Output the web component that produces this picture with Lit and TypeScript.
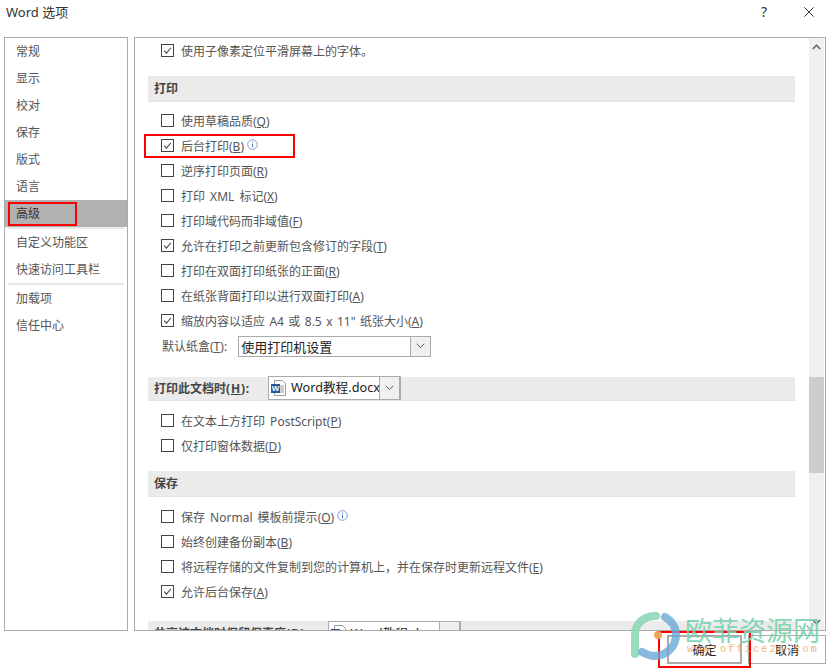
import { LitElement, html, css, svg } from "lit";
import { customElement } from "lit/decorators.js";

const check = svg`<path d="M2.6 6.6 5.3 9.6 10.6 3.2" fill="none" stroke="#444" stroke-width="1.2"/>`;
const wordIcon = html`<svg class="word" viewBox="0 0 16 16" width="16" height="16">
  <path d="M3.5.5h8l3 3v12h-11z" fill="#fff" stroke="#9a9a9a"/>
  <path d="M9 6h4M9 8h4M9 10h4M9 12h4" stroke="#9a9a9a"/>
  <rect x="0" y="4" width="9" height="9" fill="#2b579a"/>
  <text x="4.5" y="11.4" font-size="8" font-weight="700" fill="#fff" text-anchor="middle" font-family="Liberation Sans">W</text>
</svg>`;
const info = html`<svg class="info" viewBox="0 0 11 11" width="11" height="11">
  <circle cx="5.5" cy="5.5" r="4.8" fill="none" stroke="#7f9fd6"/>
  <path d="M5.5 2.6v1.2M5.5 4.8v3.4" stroke="#4a78c4" stroke-width="1"/>
</svg>`;
const chev = html`<svg viewBox="0 0 9 6" width="9" height="6"><path d="M.7.8 4.5 4.6 8.3.8" fill="none" stroke="#555" stroke-width="1"/></svg>`;

type Row = { t: unknown; c?: boolean; i?: boolean };

const printRows: Row[] = [
  { t: html`使用草稿品质(<u>Q</u>)` },
  { t: html`后台打印(<u>B</u>)`, c: true, i: true },
  { t: html`逆序打印页面(<u>R</u>)` },
  { t: html`打印 XML 标记(<u>X</u>)` },
  { t: html`打印域代码而非域值(<u>F</u>)` },
  { t: html`允许在打印之前更新包含修订的字段(<u>T</u>)`, c: true },
  { t: html`打印在双面打印纸张的正面(<u>R</u>)` },
  { t: html`在纸张背面打印以进行双面打印(<u>A</u>)` },
  { t: html`<span class="tight">缩放内容以适应 A4 或 8.5 x 11" 纸张大小(<u>A</u>)</span>`, c: true },
];
const docRows: Row[] = [
  { t: html`在文本上方打印 PostScript(<u>P</u>)` },
  { t: html`仅打印窗体数据(<u>D</u>)` },
];
const saveRows: Row[] = [
  { t: html`保存 Normal 模板前提示(<u>O</u>)`, i: true },
  { t: html`始终创建备份副本(<u>B</u>)` },
  { t: html`将远程存储的文件复制到您的计算机上，并在保存时更新远程文件(<u>E</u>)` },
  { t: html`允许后台保存(<u>A</u>)`, c: true },
];

@customElement("app-root")
export class AppRoot extends LitElement {
  static styles = css`
    :host {
      display: block;
      width: 829px;
      height: 669px;
      position: relative;
      overflow: hidden;
      background: #fff;
      font-family: "Noto Sans", "Noto Sans CJK SC", sans-serif;
      font-size: 12px;
      color: #555;
    }
    .title {
      height: 37px;
      display: flex;
      align-items: center;
      padding: 0 15px 14px 6px;
      box-sizing: border-box;
      color: #333;
      font-size: 13px;
    }
    .title .name { flex: 1; }
    .help { font-size: 14px; color: #333; margin-right: 37px; }
    .main {
      display: flex;
      gap: 6px;
      height: 594px;
      padding: 0 3px 0 4px;
    }
    .nav {
      width: 124px;
      box-sizing: border-box;
      border: 1px solid #ababab;
      flex: none;
    }
    .nav .item {
      height: 27px;
      line-height: 27px;
      padding-left: 11px;
    }
    .nav .item.sel { background: #b1b1b1; color: #333; }
    .nav .sep { height: 2px; background: #e8e8e8; margin: 0 3px; }
    .panel {
      flex: 1;
      box-sizing: border-box;
      border: 1px solid #ababab;
      display: flex;
      overflow: hidden;
      min-width: 0;
    }
    .scroll { flex: 1; min-width: 0; height: 592px; overflow: hidden; padding: 0 14px 0 13px; }
    .row {
      height: 25px;
      display: flex;
      align-items: center;
      padding-left: 13px;
      gap: 7px;
      white-space: nowrap;
      word-spacing: 2px;
    }
    .tight { word-spacing: 1.3px; }
    .box { width: 13px; height: 13px; flex: none; box-sizing: border-box; display: block; border: 1px solid #444; background: #fff; }
    u { text-underline-offset: 1px; }
    .info { margin: -3px 0 0 -4px; flex: none; }
    .head {
      background: #ebebeb;
      height: 26px;
      display: flex;
      align-items: center;
      padding: 0 0 2px 6px;
      color: #444;
      font-weight: 700;
      border-bottom: 1px solid #e2e2e2;
      box-sizing: border-box;
      white-space: nowrap;
    }
    .lat { letter-spacing: .8px; }
    .h1 { margin-top: 13px; margin-bottom: 6px; }
    .comborow { height: 26px; display: flex; align-items: center; padding-left: 14px; gap: 11px; }
    .h2 { margin-top: 18px; height: 24px; margin-bottom: 7px; }
    .h3 { margin-top: 13px; margin-bottom: 7px; }
    .h4 { margin-top: 17px; height: 24px; align-items: flex-start; padding-top: 3px; }
    .combo {
      display: flex;
      align-items: stretch;
      box-sizing: border-box;
      border: 1px solid #ababab;
      background: #fff;
      color: #222;
    }
    .combo .val { flex: 1; display: flex; align-items: center; gap: 4px; padding-left: 2px; font-size: 13px; white-space: nowrap; overflow: hidden; font-weight: 400; min-width: 0; }
    .combo .doc { font-size: 12.7px; padding-bottom: 2px; }
    .combo .doc svg { margin-top: 2px; }
    .combo .btn { width: 19px; background: #f0f0f0; border-left: 1px solid #ababab; display: flex; align-items: center; justify-content: center; flex: none; }
    .c1 { width: 193px; height: 21px; }
    .c2 { width: 133px; height: 24px; margin-left: 18px; border-width: 1px 2px 1px 1px; }
    .c3 { width: 133px; height: 24px; margin-left: 18px; margin-top: -3px; border-width: 1px 2px 1px 1px; }
    .word { flex: none; }
    .track {
      width: 15px;
      background: #f0f0f0;
      flex: none;
      display: flex;
      flex-direction: column;
      align-items: center;
      margin-right: 1px;
    }
    .up { height: 17px; display: flex; align-items: center; justify-content: center; }
    .spacer1 { height: 322px; }
    .thumb { width: 15px; height: 96px; background: #cdcdcd; flex: none; }
    .spacer2 { flex: 1; }
    .footer {
      display: flex;
      justify-content: flex-end;
      gap: 6px;
      padding: 4px 3px 0 0;
    }
    .bt {
      height: 29px;
      box-sizing: border-box;
      display: flex;
      align-items: center;
      justify-content: center;
      color: #222;
      background: #fff;
      border: 1px solid #ababab;
    }
    .ok { width: 75px; border: 2px solid #ababab; }
    .cancel { width: 78px; }
    .red { position: absolute; border: 2px solid #f00; box-sizing: border-box; pointer-events: none; }
    .red.a { left: 8px; top: 202px; width: 69px; height: 24px; }
    .red.b { left: 144px; top: 134px; width: 151px; height: 24px; }
    .red.c { left: 658px; top: 631px; width: 93px; height: 37px; }
    .wm { position: absolute; left: 0; top: 0; pointer-events: none; }
    .logo { position: absolute; left: 628px; top: 608px; }
    .wm-cn { position: absolute; left: 685px; top: 614px; font-size: 27px; line-height: 34px; color: #79d2ae; opacity: .9; white-space: nowrap; }
    .wm-en { position: absolute; left: 687px; top: 642px; font-size: 10px; line-height: 16px; color: #f0a860; letter-spacing: 2.25px; white-space: nowrap; font-family: "Liberation Mono", monospace; opacity: .85; }
  `;

  row(r: Row) {
    return html`<div class="row">
      <svg class="box" viewBox="0 0 13 13" style="overflow:visible">${r.c ? check : ""}</svg>
      <span>${r.t}</span>${r.i ? info : ""}
    </div>`;
  }

  render() {
    return html`
      <div class="title">
        <span class="name">Word 选项</span>
        <span class="help">?</span>
        <svg width="10" height="10" viewBox="0 0 10 10"><path d="M.3.3l9.4 9.4M9.7.3.3 9.7" stroke="#333" stroke-width="1" fill="none"/></svg>
      </div>
      <div class="main">
        <div class="nav">
          <div class="item">常规</div>
          <div class="item">显示</div>
          <div class="item">校对</div>
          <div class="item">保存</div>
          <div class="item">版式</div>
          <div class="item">语言</div>
          <div class="item sel">高级</div>
          <div class="sep"></div>
          <div class="item">自定义功能区</div>
          <div class="item">快速访问工具栏</div>
          <div class="sep"></div>
          <div class="item">加载项</div>
          <div class="item">信任中心</div>
        </div>
        <div class="panel">
          <div class="scroll">
            <div class="row">
              <svg class="box" viewBox="0 0 13 13" style="overflow:visible">${check}</svg>
              <span>使用子像素定位平滑屏幕上的字体。</span>
            </div>
            <div class="head h1">打印</div>
            ${printRows.map((r) => this.row(r))}
            <div class="comborow">
              <span>默认纸盒(<u>T</u>):</span>
              <div class="combo c1"><span class="val">使用打印机设置</span><span class="btn">${chev}</span></div>
            </div>
            <div class="head h2">
              <span>打印此文档时<span class="lat">(<u>H</u>):</span></span>
              <div class="combo c2"><span class="val doc">${wordIcon}Word教程.docx</span><span class="btn">${chev}</span></div>
            </div>
            ${docRows.map((r) => this.row(r))}
            <div class="head h3">保存</div>
            ${saveRows.map((r) => this.row(r))}
            <div class="head h4">
              <span>共享该文档时保留保真度<span class="lat">(<u>D</u>):</span></span>
              <div class="combo c3"><span class="val doc">${wordIcon}Word教程.docx</span><span class="btn">${chev}</span></div>
            </div>
          </div>
          <div class="track">
            <div class="up"><svg width="9" height="6" viewBox="0 0 9 6"><path d="M.8 5 4.5 1.3 8.2 5" fill="none" stroke="#606060" stroke-width="1.6"/></svg></div>
            <div class="spacer1"></div>
            <div class="thumb"></div>
            <div class="spacer2"></div>
            <div class="up"><svg width="9" height="6" viewBox="0 0 9 6"><path d="M.8 1 4.5 4.7 8.2 1" fill="none" stroke="#606060" stroke-width="1.6"/></svg></div>
          </div>
        </div>
      </div>
      <div class="footer">
        <div class="bt ok">确定</div>
        <div class="bt cancel">取消</div>
      </div>
      <div class="red a"></div>
      <div class="red b"></div>
      <div class="red c"></div>
      <div class="wm">
        <svg class="logo" width="54" height="54" viewBox="0 0 54 54">
          <path d="M7 46V27C7 15 16 8 28 8" fill="none" stroke="#8dd8b8" stroke-width="8" stroke-linecap="round" opacity=".9"/>
          <path d="M37 9C44 13 48 20 48 27C48 39 38 48 26 48C22 48 18 46 14 44" fill="none" stroke="#6aa7d6" stroke-width="8" stroke-linecap="round" opacity=".8"/>
          <circle cx="30" cy="27" r="4" fill="#f5a65b"/>
        </svg>
        <span class="wm-cn">欧菲资源网</span>
        <span class="wm-en">www.office26.com</span>
      </div>
    `;
  }
}
